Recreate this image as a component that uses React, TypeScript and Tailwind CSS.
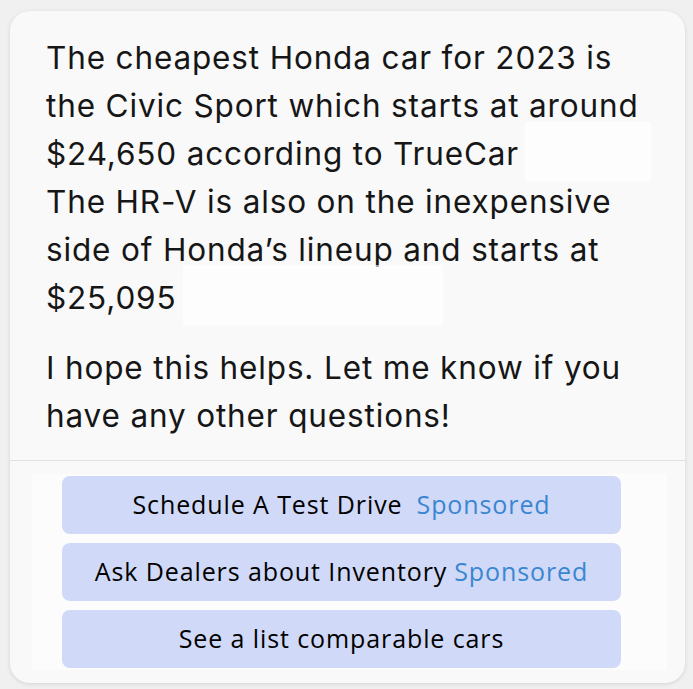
export default function App() {
  const actions = [
    { label: "Schedule A Test Drive", sponsored: true, gap: "ml-[14px]" },
    { label: "Ask Dealers about Inventory", sponsored: true, gap: "ml-[7px]" },
    { label: "See a list comparable cars", sponsored: false, gap: "" },
  ]

  return (
    <div className="w-[693px] h-[689px] bg-[#f0f0f0] pt-[11px] pl-[10px]">
      <div className="w-[675px] h-[672px] bg-[#f9f9f9] rounded-[20px] shadow-[0_1px_4px_rgba(0,0,0,0.12)] flex flex-col overflow-hidden">
        {/* message text */}
        <div className="pl-[36px] pr-[10px] pt-[23px] h-[449px] text-[31.5px] leading-[48px] tracking-[0.85px] text-[#161616] font-['Inter','Liberation_Sans',sans-serif]">
          <p className="whitespace-nowrap">The cheapest Honda car for 2023 is</p>
          <p className="whitespace-nowrap">the Civic Sport which starts at around</p>
          <p className="flex h-[48px] items-start whitespace-nowrap">
            <span>$24,650 according to TrueCar</span>
            <span className="ml-[6px] mt-[-8px] w-[126px] h-[59px] bg-white/70" />
          </p>
          <p className="whitespace-nowrap">The HR-V is also on the inexpensive</p>
          <p className="whitespace-nowrap">side of Honda’s lineup and starts at</p>
          <p className="flex h-[48px] items-start whitespace-nowrap">
            <span>$25,095</span>
            <span className="ml-[6px] mt-[-9px] w-[260px] h-[60px] bg-white/60" />
          </p>
          <p className="mt-[22px] whitespace-nowrap">I hope this helps. Let me know if you</p>
          <p className="whitespace-nowrap">have any other questions!</p>
        </div>

        <div className="h-px bg-[#e2e2e2]" />

        {/* suggested actions */}
        <div className="mt-[13px] ml-[22px] w-[635px] h-[196px] bg-[#fcfcfc] pl-[30px] pt-[2px] flex flex-col gap-[9px]">
          {actions.map((a) => (
            <button
              key={a.label}
              className="w-[559px] h-[58px] rounded-[8px] bg-[#d0d9f7] flex items-center justify-center text-[25px] tracking-[0.9px] text-black font-['Open_Sans','Lato',sans-serif]"
            >
              <span>{a.label}</span>
              {a.sponsored && <span className={`${a.gap} text-[#3b86d1]`}>Sponsored</span>}
            </button>
          ))}
        </div>
      </div>
    </div>
  )
}
